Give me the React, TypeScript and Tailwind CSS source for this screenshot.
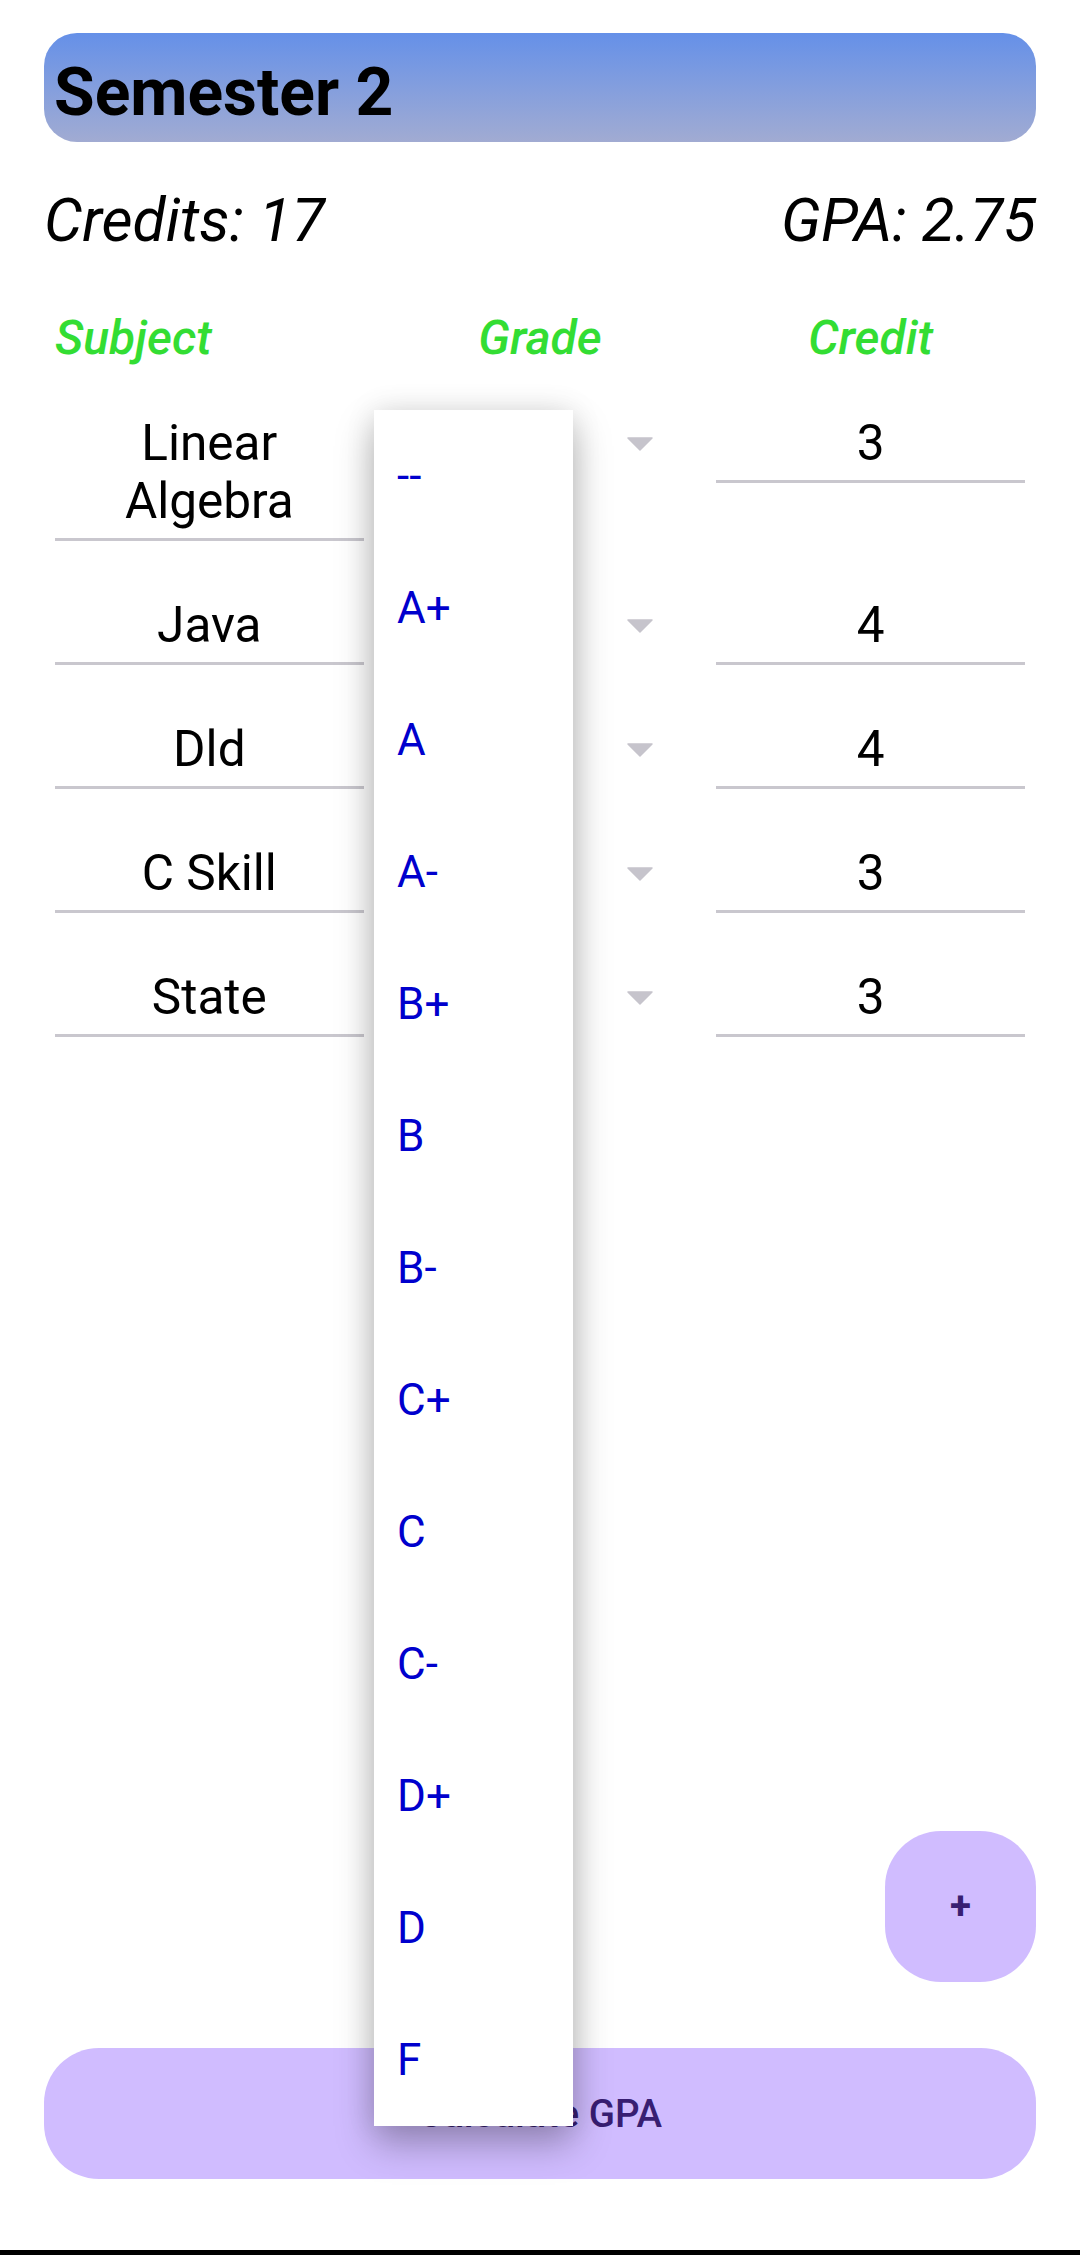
import React from "react";

const rows = [
  { subject: ["Linear", "Algebra"], credit: "3" },
  { subject: ["Java"], credit: "4" },
  { subject: ["Dld"], credit: "4" },
  { subject: ["C Skill"], credit: "3" },
  { subject: ["State"], credit: "3" },
];

const grades = ["--", "A+", "A", "A-", "B+", "B", "B-", "C+", "C", "C-", "D+", "D", "F"];

function Caret() {
  return (
    <svg width="26" height="14" viewBox="0 0 26 14" className="block">
      <path d="M1 1 L25 1 L13 13 Z" fill="#c6c4cc" stroke="#c6c4cc" strokeWidth="1.5" strokeLinejoin="round" />
    </svg>
  );
}

export default function App() {
  return (
    <div className="relative flex min-h-[2255px] flex-col bg-white font-['Roboto',sans-serif] text-black">
      <div className="px-[44px]">
        <div className="mt-[33px] h-[109px] rounded-[33px] bg-linear-to-b from-[#6590e8] to-[#a1abd2] pl-[10px] pt-[21px]">
          <div className="text-[66px] font-bold leading-[77px]">Semester 2</div>
        </div>

        <div className="mt-[44px] flex justify-between text-[60.5px] italic leading-[70px]">
          <span>Credits: 17</span>
          <span>GPA: 2.75</span>
        </div>

        <div className="mt-[54px] grid grid-cols-3 text-[48px] font-medium italic leading-[56px] text-[#33dd33]">
          <div className="mx-[11px] text-left">Subject</div>
          <div className="mx-[11px] text-center">Grade</div>
          <div className="mx-[11px] text-center">Credit</div>
        </div>

        <div className="mt-[48px] flex flex-col gap-[55px]">
          {rows.map((r, i) => (
            <div key={i} className="grid grid-cols-3 items-start text-[49.5px] leading-[58px]">
              <div className="mx-[11px] border-b-[3px] border-[#c9c7ce] pb-[8px] text-center">
                {r.subject.map((l, j) => (
                  <div key={j}>{l}</div>
                ))}
              </div>
              <div className="mx-[11px] flex justify-end pr-[41px] pt-[23px]">
                <Caret />
              </div>
              <div className="mx-[11px] border-b-[3px] border-[#c9c7ce] pb-[8px] text-center">{r.credit}</div>
            </div>
          ))}
        </div>
      </div>

      <div className="flex-1" />

      <div className="flex justify-end px-[44px]">
        <button className="flex h-[151px] w-[151px] items-center justify-center rounded-[56px] bg-[#d0bcff] text-[38.5px] font-bold leading-none text-[#381e72]">
          +
        </button>
      </div>

      <div className="mt-[66px] px-[44px]">
        <button className="flex h-[131px] w-full items-center justify-center rounded-[55px] bg-[#d0bcff] text-[38.5px] font-medium text-[#381e72]">
          Calculate GPA
        </button>
      </div>

      <div className="h-[71px]" />
      <div className="h-[5px] bg-black" />

      <div className="absolute left-[374px] top-[410px] z-10 flex h-[1716px] w-[199px] flex-col bg-white shadow-[0_18px_36px_rgba(0,0,0,0.28),0_0_28px_rgba(0,0,0,0.10)]">
        {grades.map((g) => (
          <div key={g} className="flex h-[132px] items-center pl-[23px] text-[44px] leading-[52px] text-[#0000cd]">
            {g}
          </div>
        ))}
      </div>
    </div>
  );
}
